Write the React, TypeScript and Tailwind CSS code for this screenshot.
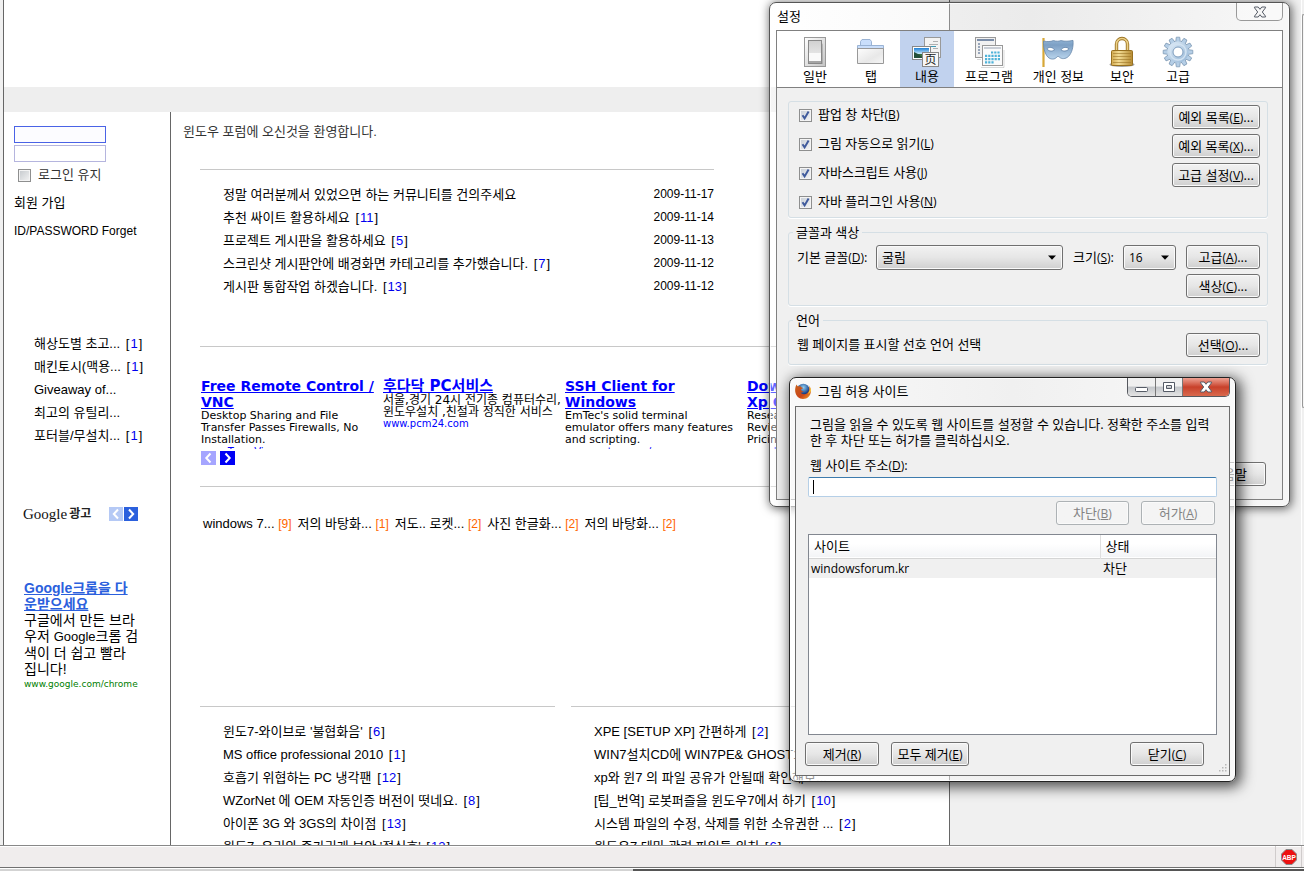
import React from "react";

const pageFont = "font-['Liberation_Sans','Noto_Sans_CJK_KR',sans-serif]";
const dialogFont = "font-['Open_Sans','Noto_Sans_CJK_KR',sans-serif]";
const adFont = "font-['DejaVu_Sans','Noto_Sans_CJK_KR',sans-serif]";

type Post = { title: string; count?: number; date?: string };

const notices: Post[] = [
  { title: "정말 여러분께서 있었으면 하는 커뮤니티를 건의주세요", date: "2009-11-17" },
  { title: "추천 싸이트 활용하세요", count: 11, date: "2009-11-14" },
  { title: "프로젝트 게시판을 활용하세요", count: 5, date: "2009-11-13" },
  { title: "스크린샷 게시판안에 배경화면 카테고리를 추가했습니다.", count: 7, date: "2009-11-12" },
  { title: "게시판 통합작업 하겠습니다.", count: 13, date: "2009-11-12" },
];

const sidePosts: Post[] = [
  { title: "해상도별 초고...", count: 1 },
  { title: "매킨토시(맥용...", count: 1 },
  { title: "Giveaway of..." },
  { title: "최고의 유틸리..." },
  { title: "포터블/무설치...", count: 1 },
];

const leftPosts: Post[] = [
  { title: "윈도7-와이브로 '불협화음'", count: 6 },
  { title: "MS office professional 2010", count: 1 },
  { title: "호흡기 위협하는 PC 냉각팬", count: 12 },
  { title: "WZorNet 에 OEM 자동인증 버전이 떳네요.", count: 8 },
  { title: "아이폰 3G 와 3GS의 차이점", count: 13 },
  { title: "윈도7, 윤리와 증가리개 보안 '점심호'", count: 12 },
];

const rightPosts: Post[] = [
  { title: "XPE [SETUP XP] 간편하게", count: 2 },
  { title: "WIN7설치CD에 WIN7PE& GHOST11.5", count: 3 },
  { title: "xp와 윈7 의 파일 공유가 안될때 확인해보..." },
  { title: "[팁_번역] 로봇퍼즐을 윈도우7에서 하기", count: 10 },
  { title: "시스템 파일의 수정, 삭제를 위한 소유권한 ...", count: 2 },
  { title: "윈도우7 테마 관련 파일들 위치", count: 6 },
];

const shots: Post[] = [
  { title: "windows 7...", count: 9 },
  { title: "저의 바탕화...", count: 1 },
  { title: "저도.. 로켓...", count: 2 },
  { title: "사진 한글화...", count: 2 },
  { title: "저의 바탕화...", count: 2 },
];

const ads = [
  { title: "Free Remote Control /\nVNC", text: "Desktop Sharing and File\nTransfer Passes Firewalls, No\nInstallation.", url: "www.TeamViewer.com" },
  { title: "후다닥 PC서비스", text: "서울,경기 24시 전기종 컴퓨터수리,\n윈도우설치 ,친절과 정직한 서비스", url: "www.pcm24.com", hangul: true },
  { title: "SSH Client for\nWindows", text: "EmTec's solid terminal\nemulator offers many features\nand scripting.", url: "www.emtec.com/zoc" },
  { title: "Download\nXp Codecs", text: "Research Windows\nReviews, Compare\nPricing Online", url: "www.business.com" },
];

function PostLink({ post }: { post: Post }) {
  return (
    <a href="#" className="whitespace-nowrap text-black">
      {post.title}
      {post.count !== undefined && (
        <span className="ml-[2px]">
          {" "}[<span className="px-px text-[#0000ee]">{post.count}</span>]
        </span>
      )}
    </a>
  );
}

function PostList({ posts }: { posts: Post[] }) {
  return (
    <ul className="leading-[23px]">
      {posts.map((p) => (
        <li key={p.title} className="h-[23px]">
          <PostLink post={p} />
        </li>
      ))}
    </ul>
  );
}

function Arrow({ dir, className }: { dir: "left" | "right"; className: string }) {
  return (
    <button type="button" aria-label={dir === "left" ? "이전" : "다음"} className={"flex items-center justify-center " + className}>
      <svg viewBox="0 0 14 14" className="size-full" fill="none" stroke="white" strokeWidth="2">
        <path d={dir === "left" ? "M9 2.5 4.8 7 9 11.5" : "M5 2.5 9.2 7 5 11.5"} />
      </svg>
    </button>
  );
}

function Sidebar() {
  return (
    <aside className="flex w-[167px] shrink-0 flex-col border-r border-[#666] pt-[14px] pl-[10px]">
      <form className="flex flex-col">
        <input aria-label="ID" className="h-[17px] w-[92px] border border-[#4a63e6] bg-[#fcfcff] px-1 text-xs outline-none" />
        <input aria-label="PASSWORD" type="password" className="mt-[2px] h-[17px] w-[92px] border border-[#b5b5de] bg-white px-1 text-xs outline-none" />
        <label className="mt-[3px] flex h-5 items-center gap-[7px] pl-1 text-[#333]">
          <input type="checkbox" className="size-[13px] appearance-none border border-[#8e8f8f] bg-linear-to-br from-[#c4c8cc] to-[#f4f4f4] shadow-[inset_0_0_0_1px_#f4f4f4]" />
          로그인 유지
        </label>
      </form>
      <a href="#" className="mt-1 h-7 leading-7 text-black">회원 가입</a>
      <a href="#" className="h-7 text-xs leading-7 text-black">ID/PASSWORD Forget</a>
      <div className="mt-[87px] pl-5">
        <PostList posts={sidePosts} />
      </div>
      <div className="mt-[60px] flex h-[14px] items-center pl-[9px]">
        <span className="font-['Liberation_Serif',serif] text-[15px] leading-[14px] text-[#111]">Google</span>
        <span className="ml-[2px] text-xs leading-[14px] font-bold text-[#222]">광고</span>
        <div className="ml-auto flex gap-[1px] pr-8">
          <Arrow dir="left" className="size-[14px] bg-[#b5c9f5]" />
          <Arrow dir="right" className="size-[14px] bg-[#2b60dd]" />
        </div>
      </div>
      <div className="mt-[59px] ml-[10px] w-[115px] overflow-hidden text-sm leading-4 whitespace-nowrap">
        <a href="#" className="block font-bold text-[#2b60dd] underline">Google크롬을 다<br />운받으세요</a>
        <p>구글에서 만든 브라<br />우저 <span className="text-[13px]">Google</span>크롬 검<br />색이 더 쉽고 빨라<br />집니다!</p>
        <a href="#" className={"block text-[9px] leading-[14px] text-[#008000] " + adFont}>www.google.com/chrome</a>
      </div>
    </aside>
  );
}

function Forum() {
  return (
    <main className="min-w-0 flex-1 pt-[10px] pl-3">
      <p className="h-5 leading-5 text-[#333]">윈도우 포럼에 오신것을 환영합니다.</p>
      <div className="mt-[27px] mr-[23px] ml-[17px]">
        <section className="max-w-[514px] border-t border-[#c8c8c8] pt-[13px] pl-[23px]">
          <table className="w-full leading-[23px]">
            <tbody>
              {notices.map((n) => (
                <tr key={n.title} className="h-[23px]">
                  <td className="p-0"><PostLink post={n} /></td>
                  <td className="w-[60px] p-0 text-xs leading-[23px] whitespace-nowrap">{n.date}</td>
                </tr>
              ))}
            </tbody>
          </table>
        </section>
        <section className="mt-12 border-y border-[#c8c8c8] pt-[31px] pb-[21px]">
          <div className={"grid h-[71px] grid-cols-[repeat(4,182px)] overflow-hidden pl-[1px] text-[11px] leading-3 whitespace-pre " + adFont}>
            {ads.map((ad) => (
              <article key={ad.url}>
                <a href="#" className={"block leading-4 font-bold text-[#0000ff] underline " + (ad.hangul ? "text-[15px] leading-4" : "text-sm leading-4")}>{ad.title}</a>
                <p className={ad.hangul ? "text-xs leading-3" : ""}>{ad.text}</p>
                <a href="#" className="block text-[10px] leading-3 text-[#0000ff]">{ad.url}</a>
              </article>
            ))}
          </div>
          <div className="mt-[2px] flex gap-1 pl-[1px]">
            <Arrow dir="left" className="h-[14px] w-[15px] bg-[#a5a5ff]" />
            <Arrow dir="right" className="h-[14px] w-[15px] bg-[#0000f5]" />
          </div>
        </section>
        <p className="mt-[25px] flex h-[23px] gap-[6px] pl-[3px] leading-[23px]">
          {shots.map((s, i) => (
            <a key={i} href="#" className="whitespace-nowrap text-black">
              {s.title} <span className="text-xs leading-[23px] text-[#ff6600]">[{s.count}]</span>
            </a>
          ))}
        </p>
        <div className="mt-[171px] grid grid-cols-2 gap-4">
          <section className="border-t border-[#c8c8c8] pt-[13px] pl-[23px]"><PostList posts={leftPosts} /></section>
          <section className="border-t border-[#c8c8c8] pt-[13px] pl-[23px]"><PostList posts={rightPosts} /></section>
        </div>
      </div>
    </main>
  );
}

/* ---------- dialog controls ---------- */

function Btn({ label, k, dots, className = "", disabled }: { label: string; k?: string; dots?: boolean; className?: string; disabled?: boolean }) {
  return (
    <button
      type="button"
      disabled={disabled}
      className={"h-6 rounded-[3px] border border-[#707070] bg-linear-to-b from-[#f2f2f2] from-0% via-[#e6e6e6] via-50% to-[#cfcfcf] text-center leading-[22px] whitespace-nowrap shadow-[inset_0_0_0_1px_#fafafa] disabled:border-[#adb2b5] disabled:from-[#f4f4f4] disabled:via-[#f4f4f4] disabled:to-[#f4f4f4] disabled:text-[#838383] " + className}
    >
      {label}
      {k && <Key k={k} />}
      {dots && "..."}
    </button>
  );
}

function Key({ k }: { k: string }) {
  return (
    <span className="text-xs">(<span className="underline">{k}</span>)</span>
  );
}

function Check({ label, k }: { label: string; k: string }) {
  return (
    <label className="flex h-6 items-center gap-[6px]">
      <span className="grid size-[13px]">
        <input type="checkbox" defaultChecked className="size-[13px] appearance-none border border-[#8e8f8f] bg-linear-to-br from-[#c6cdd6] to-[#f6f6f6] shadow-[inset_0_0_0_1px_#f4f4f4] [grid-area:1/1]" />
        <svg viewBox="0 0 13 13" className="pointer-events-none size-[13px] [grid-area:1/1]" fill="none" stroke="#3f5a9c" strokeWidth="2">
          <path d="M3.5 6.2 5.6 9.4 9.6 2.6" />
        </svg>
      </span>
      <span>{label}<Key k={k} /></span>
    </label>
  );
}

function Combo({ id, value, className }: { id: string; value: string; className: string }) {
  return (
    <span className={"grid h-[25px] items-center " + className}>
      <select id={id} defaultValue={value} className="h-full w-full appearance-none rounded-[3px] border border-[#707070] bg-linear-to-b from-[#f2f2f2] via-[#e6e6e6] to-[#cfcfcf] pl-[5px] shadow-[inset_0_0_0_1px_#fafafa] [grid-area:1/1]">
        <option>{value}</option>
      </select>
      <svg viewBox="0 0 8 5" className="pointer-events-none mr-[7px] h-[5px] w-2 justify-self-end [grid-area:1/1]">
        <path d="M0 .5h8L4 4.7z" fill="#000" />
      </svg>
    </span>
  );
}

/* ---------- toolbar icons ---------- */

const iconGeneral = (
  <svg viewBox="0 0 32 32" className="size-8">
    <defs>
      <linearGradient id="gen" x2="1" y2="1"><stop offset="0" stopColor="#fff" /><stop offset="1" stopColor="#c4c4c4" /></linearGradient>
      <linearGradient id="gen2" x2="0" y2="1"><stop offset="0" stopColor="#d0d0d0" /><stop offset="1" stopColor="#f4f4f4" /></linearGradient>
    </defs>
    <rect x="5.500" y="1.500" width="21" height="29" fill="url(#gen)" stroke="#999" />
    <path d="M11 28h13V7z" fill="#888" opacity=".45" />
    <rect x="9.500" y="4.500" width="13" height="23" fill="url(#gen2)" stroke="#888" />
    <path d="M10 17h12v8H10z" fill="#fafafa" />
    <path d="M10 25h12v2H10z" fill="#a5a5a5" />
  </svg>
);

const iconTabs = (
  <svg viewBox="0 0 32 32" className="size-8">
    <defs><linearGradient id="tab" x2="1" y2="1"><stop offset="0" stopColor="#fdfdfd" /><stop offset=".6" stopColor="#e8e8e8" /><stop offset="1" stopColor="#f6f6f6" /></linearGradient></defs>
    <path d="M5.500 10V5.500l1.500-2h8l1.500 2V10" fill="#c9defb" stroke="#9ab3d4" />
    <path d="M2.500 14V9.500h26V14z" fill="#c9defb" stroke="#9ab3d4" />
    <path d="M2.500 12.500h26v15h-26z" fill="url(#tab)" stroke="#999" />
  </svg>
);

const iconContent = (
  <svg viewBox="0 0 32 32" className="size-8">
    <defs>
      <linearGradient id="sky" x2="0" y2="1"><stop offset="0" stopColor="#1d7fd6" /><stop offset=".55" stopColor="#bfe4f7" /><stop offset=".6" stopColor="#35633a" /><stop offset="1" stopColor="#56a04a" /></linearGradient>
    </defs>
    <rect x="13.500" y="1.500" width="16" height="20" fill="#f3f3f3" stroke="#999" />
    <path d="M22 5.500h5M18 8.500h9M22 12.500h5" stroke="#b0b0b0" />
    <path d="M17 10.500h8" stroke="#3f9ab5" />
    <rect x="1.500" y="10.500" width="18" height="13" fill="#fff" stroke="#888" />
    <rect x="3" y="12" width="15" height="10" fill="url(#sky)" />
    <path d="M3 16l4 2 6 4H3z" fill="#24503a" />
    <rect x="11.500" y="16.500" width="16" height="14" fill="#f7f7f7" stroke="#888" />
    <text x="19.500" y="28" textAnchor="middle" fontSize="12" fontFamily="Noto Sans CJK SC, sans-serif" fill="#222">页</text>
  </svg>
);

const iconApps = (
  <svg viewBox="0 0 32 32" className="size-8">
    <rect x="2.500" y="1.500" width="20" height="20" fill="#f1f1f1" stroke="#999" />
    <path d="M4 4h17" stroke="#7b8da8" strokeWidth="2" />
    <path d="M5 8h2M5 11h2M5 14h2M5 17h2" stroke="#7b8da8" strokeWidth="1.500" />
    <rect x="9.500" y="9.500" width="20" height="20" fill="#fbfbfb" stroke="#999" />
    <path d="M11 12h17" stroke="#c9ced6" strokeWidth="2" />
    <g stroke="#4fb3d9" strokeWidth="2.200" strokeDasharray="2.200 1">
      <path d="M18 16.500h9" /><path d="M12 19.800h15" /><path d="M12 23.100h15" /><path d="M12 26.400h9" />
    </g>
    <path d="M4 23.500h4M8 31.500h23V14" stroke="#000" opacity=".15" fill="none" />
  </svg>
);

const iconPrivacy = (
  <svg viewBox="0 0 36 32" className="h-8 w-9">
    <defs><linearGradient id="mask" x2="0" y2="1"><stop offset="0" stopColor="#8fb2d4" /><stop offset=".25" stopColor="#7c9fc4" /><stop offset="1" stopColor="#b9d4ec" /></linearGradient></defs>
    <path d="M3.500 2v29" stroke="#c8921d" strokeWidth="2" />
    <path d="M3 2v29" stroke="#f2cf6a" strokeWidth=".7" />
    <path d="M3.500 5c4 1 7 .6 10-.4 2.500.8 5 .8 7.500 0 4 1 8 .6 12-.2.600 6-1 12.500-4.500 16-3 2.800-7 2.800-9 .8-.8-1-2-1-2.800 0-2 2.500-6 2.500-8.700 0C4.500 17.500 3.200 11 3.500 5z" fill="url(#mask)" stroke="#6685a8" strokeWidth=".8" />
    <path d="M7 12.800c2-2.200 5.500-1.800 7.500 1-2 1.800-5.800 1.800-7.500-1zM21 13.800c2-2.800 5.500-3.200 8-1-2 2.800-6 2.800-8 1z" fill="#fff" stroke="#5d7fa6" strokeWidth=".8" />
  </svg>
);

const iconSecurity = (
  <svg viewBox="0 0 32 32" className="size-8">
    <defs><linearGradient id="lock" x2="1"><stop offset="0" stopColor="#d0a84e" /><stop offset=".35" stopColor="#f3dc94" /><stop offset="1" stopColor="#b58a31" /></linearGradient></defs>
    <ellipse cx="16" cy="28.500" rx="12.500" ry="2.500" fill="#333" opacity=".45" />
    <path d="M10.500 16V8a5.500 5.500 0 0 1 11 0V16" fill="none" stroke="#9c7526" strokeWidth="3.400" />
    <path d="M10.500 16V8a5.500 5.500 0 0 1 11 0V16" fill="none" stroke="#ecd087" strokeWidth="1.600" />
    <rect x="5.500" y="14.500" width="21" height="15" rx="1" fill="url(#lock)" stroke="#97701f" />
    <path d="M7 17.500h18M7 20.500h18M7 23.500h18M7 26.500h18" stroke="#9c7526" opacity=".6" />
  </svg>
);

const iconAdvanced = (
  <svg viewBox="0 0 32 32" className="size-8">
    <defs><linearGradient id="gear" x2="1" y2="1"><stop offset="0" stopColor="#e1edf8" /><stop offset="1" stopColor="#94b6d6" /></linearGradient></defs>
    {Array.from({ length: 12 }, (_, i) => (
      <path key={i} d="M13.600 6.500 14.300 1.200h3.400L18.400 6.500z" fill="#b5cee6" stroke="#7f9ab5" strokeWidth=".8" transform={`rotate(${i * 30} 16 16)`} />
    ))}
    <circle cx="16" cy="16" r="10.600" fill="url(#gear)" />
    <circle cx="16" cy="16" r="8" fill="none" stroke="#d3e3f2" strokeWidth="1.500" />
    <circle cx="16" cy="16" r="5" fill="#fff" stroke="#7d9cbd" />
  </svg>
);

const tools = [
  { label: "일반", icon: iconGeneral },
  { label: "탭", icon: iconTabs },
  { label: "내용", icon: iconContent, active: true },
  { label: "프로그램", icon: iconApps },
  { label: "개인 정보", icon: iconPrivacy },
  { label: "보안", icon: iconSecurity },
  { label: "고급", icon: iconAdvanced },
];

function CloseGlyph({ fill }: { fill: string }) {
  return (
    <svg viewBox="0 0 14 12" className="h-3 w-[14px]">
      <path d="M1.500 1h3.700L7 3.300 8.800 1h3.700v.8L9.300 6l3.200 4.200v.8H8.800L7 8.700 5.200 11H1.500v-.8L4.700 6 1.500 1.800z" fill={fill} stroke="#555b66" />
    </svg>
  );
}

const groupBox = "min-w-0 rounded-[3px] border border-[#d5dfe5] shadow-[0_1px_0_#fff]";

function SettingsWindow() {
  return (
    <section
      aria-label="설정"
      className={"absolute top-[2px] left-[769px] w-[521px] rounded-[7px] border border-[#555] bg-linear-to-r from-white/40 via-[#dcdcdc]/25 to-white/50 p-[6px] pt-0 text-[13px] shadow-[inset_0_0_0_1px_#ffffffb0,1px_1px_10px_1px_#00000090] " + dialogFont}
    >
      <header className="flex h-[27px] items-start justify-between">
        <h2 className="pt-[3px] pl-[1px] text-[13px] leading-[20px]">설정</h2>
        <button type="button" aria-label="닫기" className="flex h-[18px] w-[47px] items-center justify-center rounded-b-[5px] border border-t-0 border-[#999] bg-white/30">
          <CloseGlyph fill="#f6f6f6" />
        </button>
      </header>
      <div className="border border-[#808080] bg-[#f0f0f0]">
        <nav className="flex h-[57px] gap-[2px] border-b border-[#808080] bg-white pl-[11px]">
          {tools.map((t) => (
            <button
              key={t.label}
              type="button"
              className={"flex min-w-[54px] flex-col items-center px-[9px] pt-[5px] leading-4 whitespace-nowrap " + (t.active ? "bg-[#c1d2ee]" : "")}
            >
              {t.icon}
              {t.label}
            </button>
          ))}
        </nav>
        <div className="pt-[13px] pr-[14px] pb-[13px] pl-[11px]">
          <div className={"flex justify-between p-[3px] pr-[7px] pl-[10px] " + groupBox}>
            <div className="-mt-[2px] flex flex-col gap-[5px]">
              <Check label="팝업 창 차단" k="B" />
              <Check label="그림 자동으로 읽기" k="L" />
              <Check label="자바스크립트 사용" k="J" />
              <Check label="자바 플러그인 사용" k="N" />
            </div>
            <div className="flex flex-col gap-[5px]">
              <Btn label="예외 목록" k="E" dots className="w-[88px]" />
              <Btn label="예외 목록" k="X" dots className="w-[88px]" />
              <Btn label="고급 설정" k="V" dots className="w-[88px]" />
            </div>
          </div>
          <fieldset className={"mt-[6px] flex px-[8px] pt-[5px] pr-[7px] pb-[7px] " + groupBox}>
            <legend className="-ml-[4px] h-4 px-[3px] leading-4">글꼴과 색상</legend>
            <div className="flex w-full items-start">
              <label htmlFor="face" className="w-[79px] leading-[24px] whitespace-nowrap">기본 글꼴<Key k="D" />:</label>
              <Combo id="face" value="굴림" className="w-[187px]" />
              <label htmlFor="size" className="ml-[10px] w-[50px] leading-[24px] whitespace-nowrap">크기<Key k="S" />:</label>
              <Combo id="size" value="16" className="w-[53px] text-xs" />
              <div className="ml-auto flex flex-col gap-[5px]">
                <Btn label="고급" k="A" dots className="w-[74px]" />
                <Btn label="색상" k="C" dots className="w-[74px]" />
              </div>
            </div>
          </fieldset>
          <fieldset className={"mt-[6px] px-[8px] pt-[5px] pr-[7px] pb-[7px] " + groupBox}>
            <legend className="-ml-[4px] h-4 px-[3px] leading-4">언어</legend>
            <div className="flex items-center justify-between">
              <span>웹 페이지를 표시할 선호 언어 선택</span>
              <Btn label="선택" k="O" dots className="w-[74px]" />
            </div>
          </fieldset>
          <div className="mt-[97px] flex justify-end pr-[2px]">
            <Btn label="도움말" className="w-[74px]" />
          </div>
        </div>
      </div>
    </section>
  );
}

function FirefoxIcon() {
  return (
    <svg viewBox="0 0 16 16" className="size-4">
      <defs>
        <radialGradient id="globe" cx=".5" cy=".3"><stop offset="0" stopColor="#8fd0f5" /><stop offset="1" stopColor="#173f86" /></radialGradient>
        <linearGradient id="fox" x2="1" y2="1"><stop offset="0" stopColor="#c9601a" /><stop offset=".6" stopColor="#c9461a" /><stop offset="1" stopColor="#f4a62a" /></linearGradient>
      </defs>
      <circle cx="8.300" cy="7" r="6.300" fill="url(#globe)" />
      <path d="M1.500 1.500C.3 4 0 6 .2 8.500 .7 13 4 16 8 16c4.500 0 7.900-3.500 7.900-8 0-2-.6-3.800-1.700-5 .4 2 .2 3.500-.4 5-.8 2-2.500 3.500-4.800 3.300-1.500-.1-2.600-.8-3.300-1.800 1.200.3 2.300-.2 3-.9-1-.2-2.700-.6-2.600-1.900 0-.8 1.500-.9 2.200-1.600-.9-.4-2-.5-2.500-1.600-.8-.4-1.600-.4-2.300.1-.9-.6-1.700-1.200-2-2.100z" fill="url(#fox)" />
      <path d="M14.200 3c1 2.500.6 5.800-1.400 7.800 2-.4 3-2.300 3.100-3.300 0-1.700-.7-3.400-1.700-4.500z" fill="#f9cf3c" />
    </svg>
  );
}

function ImageSitesWindow() {
  return (
    <section
      aria-label="그림 허용 사이트"
      className={"absolute top-[377px] left-[789px] w-[447px] rounded-[7px] border border-[#222] bg-linear-to-r from-white/60 via-[#f0f0f0]/50 to-white/60 p-[5px] pt-0 text-[13px] shadow-[inset_0_0_0_1px_#ffffffc0,3px_3px_14px_2px_#000000b0] " + dialogFont}
    >
      <header className="flex h-[28px] items-start">
        <span className="pt-[5px]"><FirefoxIcon /></span>
        <h2 className="pt-[3px] pl-[7px] text-[13px] leading-[20px]">그림 허용 사이트</h2>
        <div className="ml-auto flex h-[19px] overflow-hidden rounded-b-[5px] border border-t-0 border-[#55585e]">
          <button type="button" aria-label="최소화" className="flex w-[28px] items-center justify-center border-r border-[#777] bg-linear-to-b from-[#f0f0f0] from-45% via-[#c3c6ca] via-50% to-[#e4e4e4]">
            <svg viewBox="0 0 13 5" className="mt-1 h-[5px] w-[13px]"><rect x=".5" y=".5" width="12" height="4" rx="1" fill="#fff" stroke="#555b66" /></svg>
          </button>
          <button type="button" aria-label="최대화" className="flex w-[27px] items-center justify-center border-r border-[#777] bg-linear-to-b from-[#f0f0f0] from-45% via-[#c3c6ca] via-50% to-[#e4e4e4]">
            <svg viewBox="0 0 12 10" className="h-[10px] w-3"><path fillRule="evenodd" d="M.5.500h11v9H.5zM3.500 3.500v3h5v-3z" fill="#fff" stroke="#555b66" /></svg>
          </button>
          <button type="button" aria-label="닫기" className="flex w-[46px] items-center justify-center bg-linear-to-b from-[#eda193] from-0% via-[#c8402a] via-50% to-[#d9694d]">
            <CloseGlyph fill="#fff" />
          </button>
        </div>
      </header>
      <div className="relative border border-[#6b6b6b] bg-[#f0f0f0] pb-[9px]">
        <div className="px-3 pt-[9px]">
          <p className="pl-[2px] leading-4 whitespace-nowrap">
            그림을 읽을 수 있도록 웹 사이트를 설정할 수 있습니다. 정확한 주소를 입력<br />한 후 차단 또는 허가를 클릭하십시오.
          </p>
          <label htmlFor="site" className="mt-[9px] block h-4 pl-[2px] leading-4">웹 사이트 주소<Key k="D" />:</label>
          <div className="mt-1 grid h-5">
            <input id="site" className="h-5 w-full rounded-[2px] border border-[#b5cfe7] border-t-[#3d7bad] bg-white px-1 outline-none [grid-area:1/1]" />
            <span className="pointer-events-none ml-[5px] h-[14px] w-px self-center bg-black [grid-area:1/1]" />
          </div>
          <div className="mt-1 flex justify-end gap-3 pr-[2px]">
            <Btn label="차단" k="B" disabled className="w-[73px]" />
            <Btn label="허가" k="A" disabled className="w-[74px]" />
          </div>
          <div className="mt-[9px] h-[201px] border border-[#828790] bg-white">
            <table className="w-full border-collapse text-left">
              <thead>
                <tr className="h-[23px] border-b border-[#d5d5d5] bg-linear-to-b from-white from-40% to-[#f3f4f6]">
                  <th className="p-0 pl-[5px] leading-[21px] font-normal">사이트</th>
                  <th className="w-[116px] border-l border-[#dfdfdf] p-0 pl-[5px] leading-[21px] font-normal">상태</th>
                </tr>
              </thead>
              <tbody>
                <tr className="h-[19px] bg-[#f0f0f0]">
                  <td className="p-0 pl-[2px] text-xs leading-[19px]">windowsforum.kr</td>
                  <td className="p-0 pl-[3px] leading-[19px]">차단</td>
                </tr>
              </tbody>
            </table>
          </div>
        </div>
        <div className="mt-[7px] flex gap-3 pr-[25px] pl-[9px]">
          <Btn label="제거" k="R" className="w-[74px]" />
          <Btn label="모두 제거" k="E" className="w-[78px]" />
          <Btn label="닫기" k="C" className="ml-auto w-[74px]" />
        </div>
        <svg viewBox="0 0 9 9" className="absolute right-[1px] bottom-[2px] size-[9px]" fill="#b8b8b8">
          <path d="M6 0h1.500v1.500H6zM3 3h1.500v1.500H3zM6 3h1.500v1.500H6zM0 6h1.500v1.500H0zM3 6h1.500v1.500H3zM6 6h1.500v1.500H6z" />
        </svg>
      </div>
    </section>
  );
}

function StatusBar() {
  return (
    <footer className="shrink-0">
      <div className="flex h-[22px] items-stretch justify-end border-t border-[#888] bg-[#f0eded] shadow-[inset_0_1px_0_#fff]">
        <div className="flex w-[27px] items-center justify-center border-x border-[#d0cccc]">
          <svg viewBox="0 0 16 16" className="size-4" role="img" aria-label="ABP">
            <path d="M5 .5h6L15.500 5v6L11 15.500H5L.5 11V5z" fill="#ed1111" stroke="#8a8a8a" />
            <text x="8" y="10.600" textAnchor="middle" fontSize="6.500" fontWeight="bold" fontFamily="Liberation Sans, sans-serif" fill="#fff">ABP</text>
          </svg>
        </div>
        <div className="w-[2px]" />
      </div>
      <div className="h-[2px] border-t border-[#707070] bg-white" />
      <div className="flex h-[2px]">
        <div className="w-[633px] bg-[#d3d3d3]" />
        <div className="flex-1 bg-[#555]" />
      </div>
    </footer>
  );
}

export default function App() {
  return (
    <div className={"relative flex h-screen flex-col overflow-hidden bg-[#f0f0f0] text-[13px] text-black " + pageFont}>
      <div className="flex min-h-0 flex-1 overflow-hidden">
        <div className="w-[4px] shrink-0 border-r border-[#666]" />
        <div className="flex max-w-[946px] flex-1 flex-col border-r border-[#666] bg-white">
          <header className="h-[87px] shrink-0" />
          <div className="h-[25px] shrink-0 bg-[#eee]" />
          <div className="flex flex-1">
            <Sidebar />
            <Forum />
          </div>
        </div>
        <div className="ml-auto w-[3px] shrink-0 border-l border-white pt-[14px]">
          <div className="h-[394px] rounded-l-[2px] border border-r-0 border-[#999] bg-[#f5f5f5]" />
        </div>
      </div>
      <StatusBar />
      <SettingsWindow />
      <ImageSitesWindow />
    </div>
  );
}
